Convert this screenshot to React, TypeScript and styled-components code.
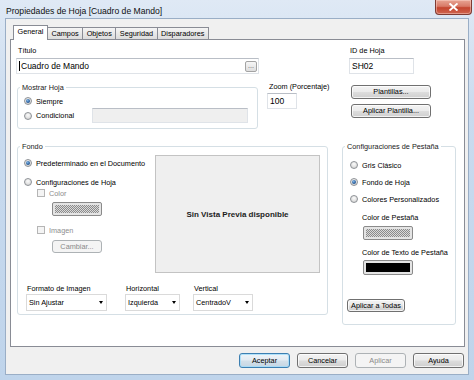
import styled, { createGlobalStyle, css } from 'styled-components';

const GlobalStyle = createGlobalStyle`
  html, body { margin: 0; padding: 0; }
  body {
    width: 474px;
    height: 380px;
    overflow: hidden;
    background: #c9dbef;
    font-family: "Liberation Sans", Arial, sans-serif;
    font-size: 7.3px;
    color: #000;
  }
  * { box-sizing: border-box; }
`;

const Window = styled.div`
  width: 474px;
  height: 380px;
  display: flex;
  flex-direction: column;
  background: linear-gradient(180deg, #dfe9f5 0%, #c9dbef 30%, #bfd4eb 100%);
`;

const TitleBar = styled.div`
  height: 18px;
  display: flex;
  align-items: flex-start;
  justify-content: space-between;
  padding: 0 2px 0 6px;
`;

const Title = styled.span`
  margin-top: 7px;
  font-size: 8.6px;
  line-height: 9px;
  color: #111;
`;

const CloseButton = styled.div`
  width: 37px;
  height: 15px;
  display: flex;
  align-items: center;
  justify-content: center;
  border: 1px solid #7e3b33;
  border-top: none;
  border-radius: 0 0 4px 4px;
  background: linear-gradient(180deg, #e8a493 0%, #d87a68 45%, #c4452f 55%, #cf6650 100%);
  box-shadow: inset 0 0 0 1px rgba(255, 220, 210, 0.45);
`;

const Client = styled.div`
  flex: 1;
  margin: 0 5px 5px;
  border: 1px solid #9aaec6;
  background: #f0f0f0;
  display: flex;
  flex-direction: column;
`;

const TabStrip = styled.div`
  height: 20px;
  display: flex;
  align-items: flex-end;
  padding-left: 7px;
`;

const Tab = styled.div<{ $active?: boolean }>`
  position: relative;
  height: 12px;
  padding: 0 3.5px;
  line-height: 11px;
  border: 1px solid #898c95;
  border-bottom: none;
  margin-right: -1px;
  background: linear-gradient(180deg, #f5f5f5 0%, #e8e8e8 50%, #dcdcdc 100%);
  ${(p) =>
    p.$active &&
    css`
      z-index: 1;
      height: 15px;
      margin-bottom: -1px;
      line-height: 12px;
      background: #fff;
    `}
`;

const Panel = styled.div`
  margin-left: 4px;
  width: 455px;
  height: 308px;
  border: 1px solid #898c95;
  background: #fff;
  padding: 6px 0 0 5px;
`;

const Row = styled.div<{ $top?: number }>`
  display: flex;
  align-items: flex-start;
  margin-top: ${(p) => p.$top ?? 0}px;
`;

const Field = styled.div<{ $w: number; $left?: number; $gap?: number }>`
  width: ${(p) => p.$w}px;
  margin-left: ${(p) => p.$left ?? 0}px;
  display: flex;
  flex-direction: column;
  gap: ${(p) => p.$gap ?? 3}px;
`;

const Label = styled.span<{ $indent?: number; $top?: number; $muted?: boolean }>`
  height: 9px;
  line-height: 9px;
  white-space: nowrap;
  padding-left: ${(p) => p.$indent ?? 0}px;
  margin-top: ${(p) => p.$top ?? 0}px;
  color: ${(p) => (p.$muted ? '#8d8d8d' : '#000')};
`;

const TextBox = styled.div<{ $w?: number; $disabled?: boolean }>`
  width: ${(p) => (p.$w ? `${p.$w}px` : '100%')};
  height: 16px;
  display: flex;
  align-items: center;
  justify-content: space-between;
  padding: 0 1px 0 2px;
  font-size: 8.5px;
  border: 1px solid #dfe3e8;
  border-top-color: #b9bec6;
  background: ${(p) => (p.$disabled ? '#efefef' : '#fff')};
`;

const Caret = styled.span`
  width: 1px;
  height: 10px;
  background: #000;
  margin-right: 1px;
`;

const InputText = styled.span`
  flex: 1;
  white-space: nowrap;
`;

const Ellipsis = styled.span`
  width: 12px;
  height: 11px;
  border: 1px solid #a3a3a3;
  border-radius: 2px;
  background: linear-gradient(180deg, #f6f6f6, #dedede);
  font-size: 7px;
  line-height: 7px;
  text-align: center;
  color: #555;
`;

const Group = styled.fieldset<{ $w: number; $h: number; $left?: number; $top?: number }>`
  width: ${(p) => p.$w}px;
  height: ${(p) => p.$h}px;
  margin: ${(p) => p.$top ?? 0}px 0 0 ${(p) => p.$left ?? 0}px;
  padding: 0;
  min-width: 0;
  border: 1px solid #d5dfe5;
  border-radius: 3px;
`;

const Legend = styled.legend`
  height: 9px;
  line-height: 9px;
  padding: 0 2px;
  margin-left: 2px;
  color: #1a1a1a;
`;

const GroupBody = styled.div<{ $pad: string }>`
  display: flex;
  flex-direction: column;
  padding: ${(p) => p.$pad};
`;

const OptionRow = styled.div<{ $top?: number; $left?: number; $h?: number }>`
  display: flex;
  align-items: center;
  gap: 4px;
  height: ${(p) => p.$h ?? 12}px;
  margin-top: ${(p) => p.$top ?? 0}px;
  margin-left: ${(p) => p.$left ?? 0}px;
  white-space: nowrap;
`;

const Radio = styled.span<{ $checked?: boolean }>`
  flex: none;
  width: 8px;
  height: 8px;
  border-radius: 50%;
  border: 1px solid #8e9296;
  display: flex;
  align-items: center;
  justify-content: center;
  background: radial-gradient(circle at 50% 35%, #fbfbfb 0%, #e2e2e2 55%, #c9c9c9 100%);
  ${(p) =>
    p.$checked &&
    css`
      &::after {
        content: '';
        width: 4px;
        height: 4px;
        border-radius: 50%;
        background: radial-gradient(circle at 40% 35%, #7fb4e4 0%, #2a5f9e 60%, #1b3f6e 100%);
      }
    `}
`;

const Check = styled.span`
  flex: none;
  width: 8px;
  height: 8px;
  border: 1px solid #b5b5b5;
  background: #f4f4f4;
`;

const Disabled = styled.span`
  color: #8d8d8d;
`;

const Swatch = styled.div<{ $h: number; $top?: number; $left?: number; $dark?: boolean }>`
  width: 50px;
  height: ${(p) => p.$h}px;
  margin-top: ${(p) => p.$top ?? 0}px;
  margin-left: ${(p) => p.$left ?? 0}px;
  padding: 2px;
  border: 1px solid #8a8a8a;
  border-radius: 2px;
  background: ${(p) =>
    p.$dark
      ? 'linear-gradient(#000, #000) content-box, #e4e4e4'
      : 'repeating-conic-gradient(#8b8b8b 0 25%, #dadada 0 50%) 0 0 / 2px 2px content-box, #e4e4e4'};
`;

const Btn = styled.button<{
  $w: number;
  $h: number;
  $top?: number;
  $left?: number;
  $variant?: 'normal' | 'primary' | 'disabled';
}>`
  flex: none;
  width: ${(p) => p.$w}px;
  height: ${(p) => p.$h}px;
  margin: ${(p) => p.$top ?? 0}px 0 0 ${(p) => p.$left ?? 0}px;
  padding: 0;
  font: inherit;
  line-height: 1;
  color: #000;
  white-space: nowrap;
  border: 1px solid #707070;
  border-radius: 3px;
  background: linear-gradient(180deg, #f3f3f3 0%, #ebebeb 48%, #dddddd 52%, #cfcfcf 100%);
  box-shadow: inset 0 0 0 1px rgba(255, 255, 255, 0.75);
  ${(p) =>
    p.$variant === 'primary' &&
    css`
      border-color: #3c7fb1;
      background: linear-gradient(180deg, #eef4f9 0%, #e2ebf2 48%, #d3e0ea 52%, #c6d6e3 100%);
      box-shadow: inset 0 0 0 1px rgba(160, 220, 250, 0.8);
    `}
  ${(p) =>
    p.$variant === 'disabled' &&
    css`
      color: #8a8a8a;
      border-color: #adb2b5;
      background: #f4f4f4;
      box-shadow: none;
    `}
`;

const ButtonStack = styled.div`
  display: flex;
  flex-direction: column;
  gap: 5px;
  margin-top: 3px;
`;

const FondoTop = styled.div`
  display: flex;
  align-items: flex-start;
`;

const FondoOptions = styled.div`
  flex: 1;
  display: flex;
  flex-direction: column;
`;

const Preview = styled.div`
  width: 165px;
  height: 118px;
  display: flex;
  align-items: center;
  justify-content: center;
  border: 1px solid #c3c3c3;
  background: #efefef;
  font-size: 8px;
  font-weight: bold;
  color: #1c1c1c;
`;

const SelectGrid = styled.div`
  display: grid;
  grid-template-columns: 99px 68px 60px;
  margin: 11px 0 0 2px;
`;

const SelectField = styled.div`
  display: flex;
  flex-direction: column;
  gap: 1px;
`;

const Select = styled.div<{ $w: number }>`
  width: ${(p) => p.$w}px;
  height: 17px;
  display: flex;
  align-items: center;
  justify-content: space-between;
  padding: 0 3px 0 2px;
  border: 1px solid #dadada;
  background: #fff;
  white-space: nowrap;
  &::after {
    content: '';
    border-left: 2.5px solid transparent;
    border-right: 2.5px solid transparent;
    border-top: 3px solid #000;
  }
`;

const Footer = styled.div`
  display: flex;
  justify-content: flex-end;
  gap: 7px;
  margin-top: 6px;
  padding-right: 4px;
`;

const selects = [
  { label: 'Formato de Imagen', value: 'Sin Ajustar', w: 81 },
  { label: 'Horizontal', value: 'Izquierda', w: 55 },
  { label: 'Vertical', value: 'CentradoV', w: 60 },
];

const tabs = ['General', 'Campos', 'Objetos', 'Seguridad', 'Disparadores'];

export default function App() {
  return (
    <>
      <GlobalStyle />
      <Window>
        <TitleBar>
          <Title>Propiedades de Hoja [Cuadro de Mando]</Title>
          <CloseButton>
            <svg width="9" height="8" viewBox="0 0 9 8">
              <path d="M1.2 1 L7.8 7 M7.8 1 L1.2 7" stroke="#fff" strokeWidth="1.8" strokeLinecap="square" />
            </svg>
          </CloseButton>
        </TitleBar>
        <Client>
          <TabStrip>
            {tabs.map((t, i) => (
              <Tab key={t} $active={i === 0}>
                {t}
              </Tab>
            ))}
          </TabStrip>
          <Panel>
            <Row>
              <Field $w={243}>
                <Label $indent={2}>Título</Label>
                <TextBox>
                  <Caret />
                  <InputText>Cuadro de Mando</InputText>
                  <Ellipsis>...</Ellipsis>
                </TextBox>
              </Field>
              <Field $w={65} $left={90}>
                <Label $indent={1}>ID de Hoja</Label>
                <TextBox>
                  <InputText>SH02</InputText>
                </TextBox>
              </Field>
            </Row>

            <Row $top={8}>
              <Group $w={241} $h={46} $left={1} $top={1}>
                <Legend>Mostrar Hoja</Legend>
                <GroupBody $pad="3px 9px 0 6px">
                  <OptionRow>
                    <Radio $checked />
                    Siempre
                  </OptionRow>
                  <OptionRow $top={1} $h={15}>
                    <Radio />
                    Condicional
                    <TextBox $w={156} $disabled style={{ marginLeft: 'auto', height: 15 }} />
                  </OptionRow>
                </GroupBody>
              </Group>
              <Field $w={84} $left={9} $gap={2}>
                <Label $indent={2}>Zoom (Porcentaje)</Label>
                <TextBox $w={30}>
                  <InputText>100</InputText>
                </TextBox>
              </Field>
              <ButtonStack>
                <Btn $w={80} $h={14}>
                  Plantillas...
                </Btn>
                <Btn $w={80} $h={14}>
                  Aplicar Plantilla...
                </Btn>
              </ButtonStack>
            </Row>

            <Row $top={13}>
              <Group $w={311} $h={173} $left={1}>
                <Legend>Fondo</Legend>
                <GroupBody $pad="4px 7px 0 6px">
                  <FondoTop>
                    <FondoOptions>
                      <OptionRow $top={2}>
                        <Radio $checked />
                        Predeterminado en el Documento
                      </OptionRow>
                      <OptionRow $top={7}>
                        <Radio />
                        Configuraciones de Hoja
                      </OptionRow>
                      <OptionRow $left={13} $h={10}>
                        <Check />
                        <Disabled>Color</Disabled>
                      </OptionRow>
                      <Swatch $h={14} $top={4} $left={28} />
                      <OptionRow $left={13} $h={10} $top={9}>
                        <Check />
                        <Disabled>Imagen</Disabled>
                      </OptionRow>
                      <Btn $w={50} $h={13} $top={5} $left={28} $variant="disabled">
                        Cambiar...
                      </Btn>
                    </FondoOptions>
                    <Preview>Sin Vista Previa disponible</Preview>
                  </FondoTop>
                  <SelectGrid>
                    {selects.map((s) => (
                      <SelectField key={s.label}>
                        <Label $indent={1}>{s.label}</Label>
                        <Select $w={s.w}>{s.value}</Select>
                      </SelectField>
                    ))}
                  </SelectGrid>
                </GroupBody>
              </Group>

              <Group $w={114} $h={183} $left={14}>
                <Legend>Configuraciones de Pestaña</Legend>
                <GroupBody $pad="8px 0 0 7px">
                  <OptionRow>
                    <Radio />
                    Gris Clásico
                  </OptionRow>
                  <OptionRow $top={5}>
                    <Radio $checked />
                    Fondo de Hoja
                  </OptionRow>
                  <OptionRow $top={5}>
                    <Radio />
                    Colores Personalizados
                  </OptionRow>
                  <Label $indent={12} $top={8}>
                    Color de Pestaña
                  </Label>
                  <Swatch $h={14} $top={4} $left={13} />
                  <Label $indent={12} $top={8}>
                    Color de Texto de Pestaña
                  </Label>
                  <Swatch $h={15} $top={3} $left={13} $dark />
                  <Btn $w={58} $h={13} $top={24} $left={-3}>
                    Aplicar a Todas
                  </Btn>
                </GroupBody>
              </Group>
            </Row>
          </Panel>
          <Footer>
            <Btn $w={51} $h={15} $variant="primary">
              Aceptar
            </Btn>
            <Btn $w={51} $h={15}>
              Cancelar
            </Btn>
            <Btn $w={51} $h={15} $variant="disabled">
              Aplicar
            </Btn>
            <Btn $w={51} $h={15}>
              Ayuda
            </Btn>
          </Footer>
        </Client>
      </Window>
    </>
  );
}
